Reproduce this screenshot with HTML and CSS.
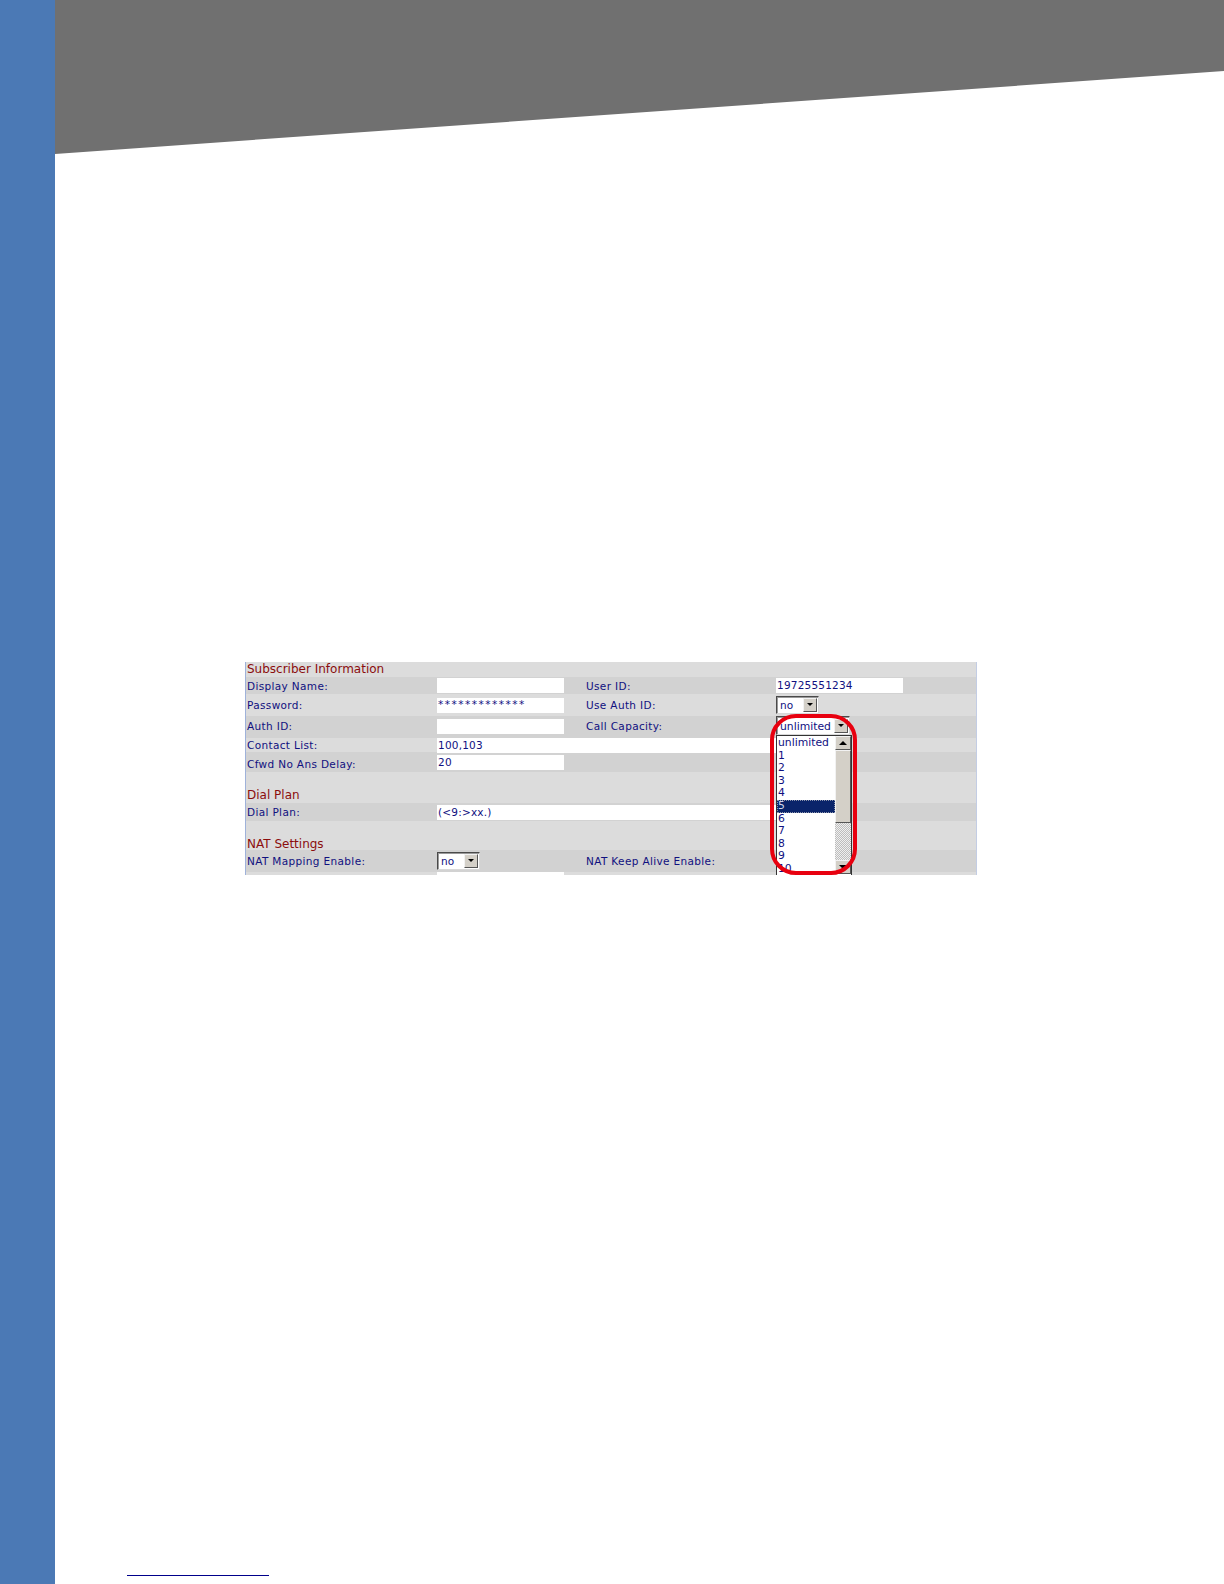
FILE: index.html
```html
<!DOCTYPE html>
<html lang="en">

<head>
    <meta charset="UTF-8">
    <title>Subscriber Information</title>
    <link rel="stylesheet" href="styles.css">
</head>

<body>
    <div class="page">
        <div class="sidebar"></div>
        <div class="main">
            <div class="banner"></div>

            <div class="settings">
                <div class="heading head-top">Subscriber Information</div>

                <div class="row row-17">
                    <span class="label">Display Name:</span>
                    <div class="field"></div>
                    <span class="label">User ID:</span>
                    <div class="field">19725551234</div>
                </div>
                <div class="row row-22 light">
                    <span class="label">Password:</span>
                    <div class="field secret">*************</div>
                    <span class="label">Use Auth ID:</span>
                    <div class="select select-no">no<span class="arrow"></span></div>
                </div>
                <div class="row row-22 row-auth">
                    <span class="label">Auth ID:</span>
                    <div class="field"></div>
                    <span class="label">Call Capacity:</span>
                </div>
                <div class="row row-14 light row-contact">
                    <span class="label">Contact List:</span>
                    <div class="field wide">100,103</div>
                </div>
                <div class="row row-20 row-cfwd">
                    <span class="label">Cfwd No Ans Delay:</span>
                    <div class="field">20</div>
                </div>

                <div class="heading head-dial">Dial Plan</div>
                <div class="row row-18">
                    <span class="label">Dial Plan:</span>
                    <div class="field wide">(&lt;9:&gt;xx.)</div>
                </div>

                <div class="heading head-nat">NAT Settings</div>
                <div class="row row-22">
                    <span class="label">NAT Mapping Enable:</span>
                    <div class="select select-no">no<span class="arrow"></span></div>
                    <span class="label">NAT Keep Alive Enable:</span>
                </div>
                <div class="row row-3 light">
                    <span></span>
                    <div class="field"></div>
                </div>

                <!-- open dropdown sits over the rows -->
                <div class="select select-open">unlimited<span class="arrow"></span></div>
                <div class="listbox">
                    <ul class="options">
                        <li>unlimited</li>
                        <li>1</li>
                        <li>2</li>
                        <li>3</li>
                        <li>4</li>
                        <li class="selected">5</li>
                        <li>6</li>
                        <li>7</li>
                        <li>8</li>
                        <li>9</li>
                        <li>10</li>
                    </ul>
                    <div class="scrollbar">
                        <div class="scroll-btn"><span class="tri-up"></span></div>
                        <div class="scroll-thumb"></div>
                        <div class="scroll-track"></div>
                        <div class="scroll-btn"><span class="tri-down"></span></div>
                    </div>
                </div>
                <div class="ring"></div>
            </div>

            <div class="footer-link"></div>
        </div>
    </div>
</body>

</html>
```

FILE: styles.css
```css
body {
    margin: 0;
    padding: 0;
    background: white;
    font-family: 'DejaVu Sans', Verdana, sans-serif;
}

.page {
    display: flex;
    height: 1584px;
    overflow: hidden;
}

.sidebar {
    width: 55px;
    flex-shrink: 0;
    background-color: #4b79b5;
}

.main {
    flex: 1;
    display: flex;
    flex-direction: column;
}

.banner {
    height: 154px;
    background-color: #707070;
    clip-path: polygon(0 0, 100% 0, 100% 71px, 0 100%);
}

.settings {
    position: relative;
    box-sizing: border-box;
    width: 732px;
    height: 213px;
    margin: 508px 0 0 190px;
    overflow: hidden;
    background-color: #dcdcdc;
    border-left: 1px solid #9fb2da;
    border-right: 1px solid #c3cde4;
    font-size: 10.5px;
    color: #10107f;
}

.heading {
    padding-left: 1px;
    font-size: 12px;
    color: #8b0d0d;
    box-sizing: border-box;
}

.head-top {
    height: 15px;
    line-height: 15px;
}

.head-dial {
    height: 31px;
    line-height: 18px;
    padding-top: 14px;
}

.head-nat {
    height: 29px;
    line-height: 18px;
    padding-top: 14px;
}

.row {
    display: grid;
    grid-template-columns: 191px 148px 191px 1fr;
    align-items: center;
    background-color: #d2d2d2;
}

.row.light {
    background-color: #dcdcdc;
}

.row-3 { height: 3px; align-items: start; }
.row-14 { height: 14px; }
.row-17 { height: 17px; }
.row-18 { height: 18px; }
.row-20 { height: 20px; }
.row-22 { height: 22px; }

.label {
    padding-left: 1px;
    letter-spacing: 0.35px;
    white-space: nowrap;
}

.row-auth .label {
    padding-bottom: 3px;
}

.row-auth .field {
    margin-bottom: 2px;
}

.row-contact .label {
    padding-bottom: 2px;
}

.row-cfwd .label {
    padding-top: 3px;
}

.field {
    box-sizing: border-box;
    width: 127px;
    height: 15px;
    padding-left: 1px;
    line-height: 15px;
    letter-spacing: 0.2px;
    background-color: white;
    white-space: nowrap;
}

.field.wide {
    grid-column: 2 / 4;
    width: 100%;
}

.field.secret {
    line-height: 12px;
    letter-spacing: 1.5px;
}

.select {
    position: relative;
    box-sizing: border-box;
    height: 18px;
    padding-left: 3px;
    line-height: 16px;
    background-color: white;
    border: 1px solid;
    border-color: #4a4a4a #d8d8d8 #d8d8d8 #4a4a4a;
    box-shadow: inset 1px 1px 0 #9a9a9a;
}

.select-no {
    width: 43px;
}

.select-open {
    position: absolute;
    top: 54px;
    left: 530px;
    width: 74px;
    height: 19px;
    line-height: 19px;
    font-size: 10.8px;
}

.arrow {
    position: absolute;
    top: 1px;
    right: 1px;
    width: 14px;
    height: 14px;
    background-color: #d4d0c8;
    border: 1px solid;
    border-color: #f2f2f2 #555 #555 #f2f2f2;
    box-sizing: border-box;
}

.select-open .arrow {
    top: 2px;
}

.arrow::after {
    content: "";
    position: absolute;
    top: 4px;
    left: 3px;
    border-left: 3px solid transparent;
    border-right: 3px solid transparent;
    border-top: 3px solid black;
}

.listbox {
    position: absolute;
    top: 73px;
    left: 530px;
    display: flex;
    box-sizing: border-box;
    width: 76px;
    height: 142px;
    background-color: white;
    border: 1px solid #333;
}

.options {
    flex: 1;
    margin: 1px 0 0;
    padding: 0;
    list-style: none;
    font-size: 10.8px;
    line-height: 12.6px;
}

.options li {
    padding-left: 1px;
    height: 12.6px;
}

.options li.selected {
    background-color: #0a246a;
    color: #cfd6ea;
    outline: 1px dotted #8b93aa;
    outline-offset: -1px;
}

.scrollbar {
    display: flex;
    flex-direction: column;
    width: 16px;
    height: 138px;
}

.scroll-btn {
    display: flex;
    align-items: center;
    justify-content: center;
    box-sizing: border-box;
    height: 14px;
    background-color: #d4d0c8;
    border: 1px solid;
    border-color: #f2f2f2 #555 #555 #f2f2f2;
}

.tri-up,
.tri-down {
    width: 0;
    height: 0;
    border-left: 4px solid transparent;
    border-right: 4px solid transparent;
}

.tri-up {
    border-bottom: 4px solid black;
}

.tri-down {
    border-top: 4px solid black;
}

.scroll-thumb {
    box-sizing: border-box;
    height: 73px;
    background-color: #d4d0c8;
    border: 1px solid;
    border-color: #f2f2f2 #555 #555 #f2f2f2;
}

.scroll-track {
    flex: 1;
    background-image: repeating-conic-gradient(#bdbdbd 0 25%, #efefef 0 50%);
    background-size: 2px 2px;
}

.ring {
    position: absolute;
    top: 52px;
    left: 524px;
    box-sizing: border-box;
    width: 87px;
    height: 161px;
    border: 4px solid #e8000f;
    border-radius: 26px;
}

.footer-link {
    width: 142px;
    height: 1px;
    margin: auto 0 8px 72px;
    background-color: #00008b;
}
```
